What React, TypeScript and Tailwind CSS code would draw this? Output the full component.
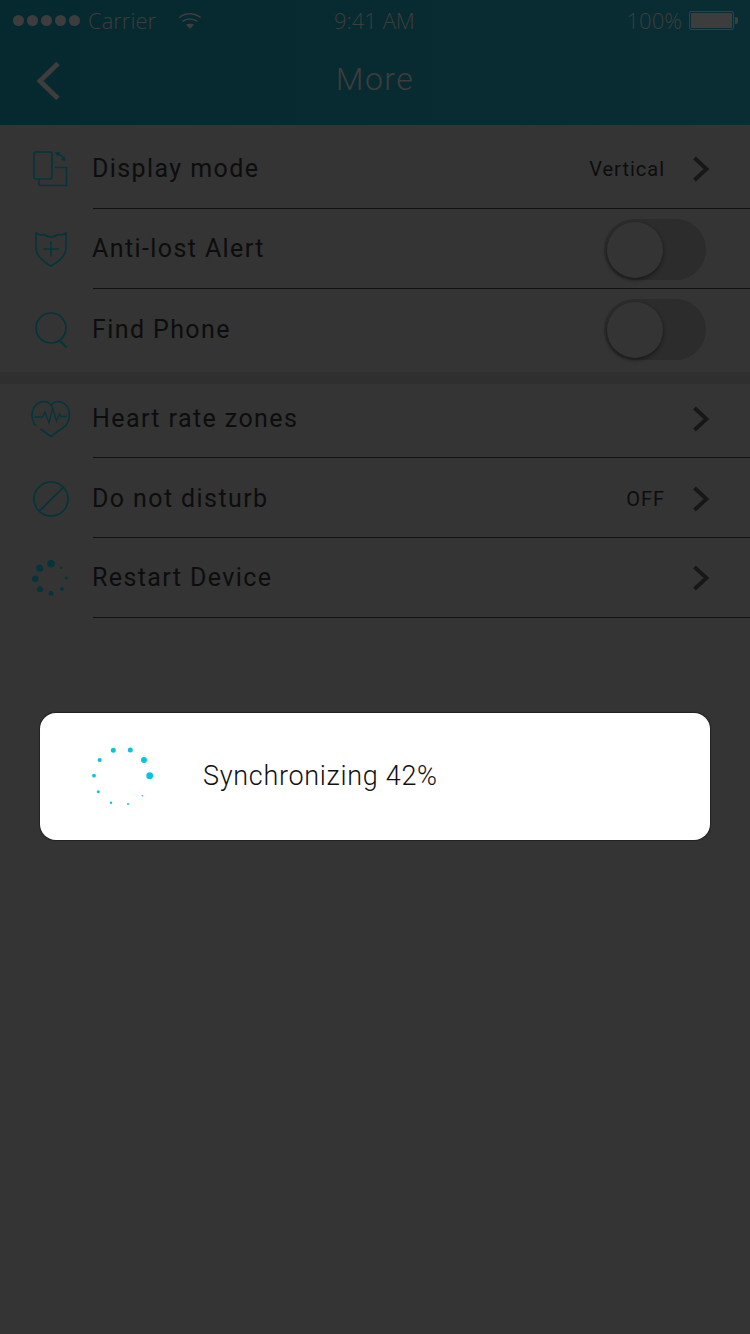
import { ReactNode } from 'react';

const din = "font-['Roboto',sans-serif]";
const myriad = "font-['Open_Sans',sans-serif]";

const Chevron = () => (
    <svg width="18" height="26" viewBox="0 0 18 26" fill="none" className="shrink-0 -mr-[4px]">
        <path d="M2.500 2L14.500 13L2.500 24" stroke="#171717" strokeWidth="3.8" />
    </svg>
);

const Toggle = () => (
    <div className="relative w-[102px] h-[61px] rounded-full bg-[#2c2c2c]">
        <div className="absolute left-[3px] top-[3px] w-[56px] h-[56px] rounded-full bg-[#343434] shadow-[0_2px_4px_rgba(0,0,0,0.45)]" />
    </div>
);

const teal = '#05343a';

const DisplayIcon = () => (
    <svg width="36" height="36" viewBox="0 0 36 36" fill="none" stroke={teal} strokeWidth="1.6">
        <rect x="1" y="1" width="18" height="27" rx="2" />
        <path d="M6 28v5.500a1 1 0 0 0 1 1h26.500V16.500H22" />
        <path d="M23 2.500c3.500 .4 6 2 8 6" />
        <path d="M22 1l3.500 4.500L27 1z M28 9l4.500 1-1-5z" fill={teal} stroke="none" />
    </svg>
);

const ShieldIcon = () => (
    <svg width="34" height="36" viewBox="0 0 34 36" fill="none" stroke={teal} strokeWidth="1.6">
        <path d="M2 2c3 2 5.500 2.500 8 1.500 3 2 4.500 2.500 7 2.500s4-.5 7-2.500c2.500 1 5 .5 8-1.500v15c0 7-6 13-15 18-9-5-15-11-15-18z" />
        <path d="M17 10.500v15M9.500 18h15" />
    </svg>
);

const SearchIcon = () => (
    <svg width="34" height="38" viewBox="0 0 34 38" fill="none" stroke={teal} strokeWidth="1.7">
        <circle cx="17" cy="17" r="15" />
        <path d="M25.500 29.500l7 7" strokeWidth="2" />
    </svg>
);

const HeartIcon = () => (
    <svg width="40" height="38" viewBox="0 0 40 38" fill="none" stroke={teal} strokeWidth="1.6">
        <path d="M5 26C2 22.500 1 19.500 1 15 1 7 7 1.500 13 1.500c3 0 5.500 1.500 7 4 1.500-2.500 4-4 7-4 6 0 11.500 5.500 11.500 13.500 0 4-1.500 7.500-4 11L20 36.500 9.500 29" />
        <path d="M3.500 17h8l2.500-5 4 11 3.500-15 4 13 3-7 1.500 2.500h6" strokeWidth="1.3" />
    </svg>
);

const BanIcon = () => (
    <svg width="36" height="36" viewBox="0 0 36 36" fill="none" stroke={teal} strokeWidth="1.7">
        <circle cx="18" cy="18" r="17" />
        <path d="M6.500 30L30 6.500" />
    </svg>
);

// spinner dots, x/y/r taken from the picture
const restartDots = [
    [19, 4.7, 3.8], [7.7, 9.3, 3.5], [3.3, 19.7, 3.2], [8, 30.3, 3], [19, 34.3, 2.3], [30, 30, 2], [34.3, 19, 1.5], [29, 8.7, 1.2],
];

const syncDots = [
    [23.3, 5.3, 2.5], [40.3, 5, 2.5], [54, 15, 3], [59.7, 30.7, 3.4], [52.3, 50.7, 0.8], [38, 59, 1], [21, 57.7, 1.2], [8.3, 46.7, 1.5], [4, 30.7, 1.9], [9.7, 15, 2.1],
];

const RestartIcon = () => (
    <svg width="38" height="38" viewBox="0 0 38 38" fill={teal}>
        {restartDots.map(([x, y, r], i) => <circle key={i} cx={x} cy={y} r={r} />)}
    </svg>
);

function Row({ icon, label, value, right, height, last, offset, textOffset }: {
    icon: ReactNode; label: string; value?: string; right?: ReactNode; height: string; last?: boolean; offset?: string; textOffset?: string;
}) {
    return (
        <div className={`flex ${height}`}>
            <div className={`w-[93px] shrink-0 flex items-center justify-center pl-[9px] ${offset ?? ''}`}>{icon}</div>
            <div className={`flex-1 flex items-center pr-[44px] ${offset ?? ''} ${last ? '' : 'border-b border-[#111]'}`}>
                <span className={`text-[25px] leading-none tracking-[1.4px] font-normal text-[#0d0d0d] -ml-[1px] ${din} ${textOffset ?? ''}`}>{label}</span>
                <div className="ml-auto flex items-center">
                    {value && <span className={`text-[20px] leading-none tracking-[1px] mr-[27px] text-[#0d0d0d] font-normal ${din}`}>{value}</span>}
                    {right ?? <Chevron />}
                </div>
            </div>
        </div>
    );
}

export default function App() {
    return (
        <div className="relative w-[750px] h-[1334px] overflow-hidden bg-[#343434]">
            <header className="h-[125px] bg-gradient-to-r from-[#06292f] to-[#0a2d33] text-[#3d3d3d]">
                <div className={`relative h-[40px] flex items-center pl-[13px] pr-[12px] text-[22px] leading-none ${myriad}`}>
                    <div className="flex gap-[3px]">
                        {[0, 1, 2, 3, 4].map((i) => <span key={i} className="w-[11px] h-[11px] rounded-full bg-[#3d3d3d]" />)}
                    </div>
                    <span className="ml-[8px] font-light">Carrier</span>
                    <svg width="24" height="19" viewBox="0 0 26 19" fill="none" stroke="#3d3d3d" strokeWidth="1.8" className="ml-[22px]">
                        <path d="M1.500 6.500C7.500 .8 17.500 .8 24.500 6.500M5 10.500c4.500-3.500 11-3.500 16 0" />
                        <path d="M8.500 14c2.500-1.200 6.500-1.200 9 0L13 18.500z" fill="#3d3d3d" stroke="none" />
                    </svg>
                    <span className="absolute left-[334px] font-light">9:41 AM</span>
                    <span className="ml-auto font-light">100%</span>
                    <div className="ml-[7px] flex items-center">
                        <div className="w-[45px] h-[19px] rounded-[2px] border border-[#3d3d3d] p-[1px]">
                            <div className="w-full h-full bg-[#3d3d3d]" />
                        </div>
                        <div className="w-[3px] h-[7px] ml-[1px] rounded-r-[2px] bg-[#3d3d3d]" />
                    </div>
                </div>
                <div className="relative h-[78px] flex items-center justify-center">
                    <svg width="26" height="40" viewBox="0 0 26 40" fill="none" className="absolute left-[35px] top-[21px]">
                        <path d="M23 2.500L5 20L23 37.500" stroke="#3d3d3d" strokeWidth="5" />
                    </svg>
                    <span className={`text-[32px] leading-none tracking-[1.4px] font-light ${din}`}>More</span>
                </div>
            </header>

            <div className="h-[247px]">
                <Row icon={<DisplayIcon />} label="Display mode" value="Vertical" height="h-[84px]" offset="pt-[4px]" />
                <Row icon={<ShieldIcon />} label="Anti-lost Alert" right={<div className="mt-[2px]"><Toggle /></div>} height="h-[80px]" />
                <Row icon={<SearchIcon />} label="Find Phone" right={<Toggle />} height="h-[83px]" last offset="pb-[2px]" />
            </div>
            <div className="h-[12px] bg-[#2f2f2f]" />
            <div>
                <Row icon={<HeartIcon />} label="Heart rate zones" height="h-[74px]" offset="pb-[4px]" />
                <Row icon={<BanIcon />} label="Do not disturb" value="OFF" height="h-[80px]" offset="pt-[2px]" />
                <Row icon={<RestartIcon />} label="Restart Device" height="h-[80px]" textOffset="-mt-[1px]" />
            </div>

            <div className="absolute left-[40px] top-[713px] w-[670px] h-[127px] rounded-[16px] bg-white flex items-center pl-[50px] shadow-[0_0_1px_1px_rgba(0,0,0,0.35)]">
                <svg width="64" height="64" viewBox="0 0 64 64" fill="#0bc4dc" className="shrink-0">
                    {syncDots.map(([x, y, r], i) => <circle key={i} cx={x} cy={y} r={r} />)}
                </svg>
                <span className={`ml-[49px] text-[27px] leading-none tracking-[0.7px] font-light text-[#111] ${din}`}>Synchronizing 42%</span>
            </div>
        </div>
    );
}
